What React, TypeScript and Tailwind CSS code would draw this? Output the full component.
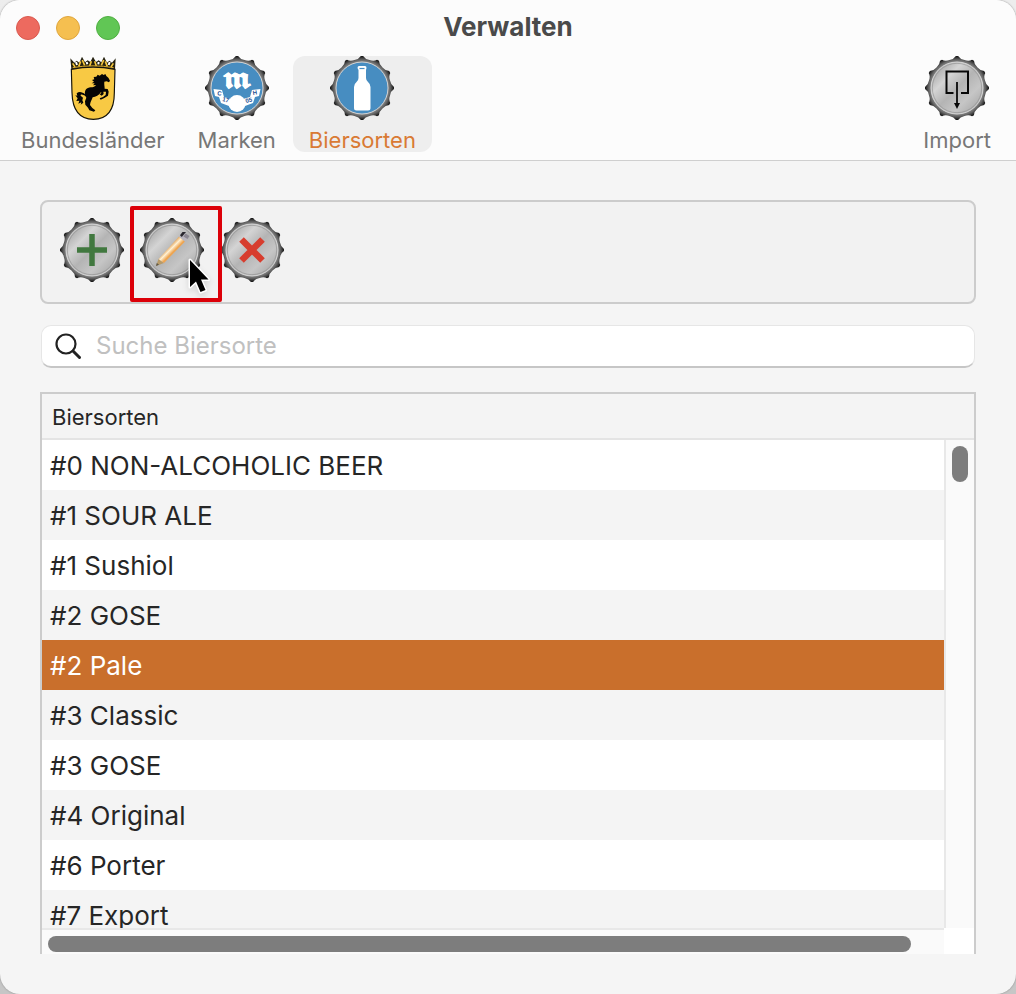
import { useState } from "react";
import type { ReactNode } from "react";
import clsx from "clsx";

const beers = [
  "#0 NON-ALCOHOLIC BEER",
  "#1 SOUR ALE",
  "#1 Sushiol",
  "#2 GOSE",
  "#2 Pale",
  "#3 Classic",
  "#3 GOSE",
  "#4 Original",
  "#6 Porter",
  "#7 Export",
];

// outline of a crown cap with twelve teeth
const TEETH = 12;
const at = (deg: number, r: number) => {
  const a = (deg * Math.PI) / 180;
  return `${(32 + r * Math.cos(a)).toFixed(2)} ${(32 + r * Math.sin(a)).toFixed(2)}`;
};
const capPath =
  Array.from({ length: TEETH }, (_, i) => {
    const d = i * 30;
    return `${i ? "L" : "M"}${at(d - 2, 32)} L${at(d + 2, 32)} Q${at(d + 6, 29)} ${at(d + 15, 29)} Q${at(d + 24, 29)} ${at(d + 28, 32)}`;
  }).join(" ") + "Z";

function Cap({ id, blue, children }: { id: string; blue?: boolean; children: ReactNode }) {
  return (
    <svg viewBox="0 0 64 64" className="size-16 shrink-0" aria-hidden="true">
      <defs>
        <radialGradient id={`${id}-rim`} gradientUnits="userSpaceOnUse" cx="32" cy="32" r="32">
          <stop offset="0.8" stopColor="#8a8a8a" />
          <stop offset="0.88" stopColor="#666" />
          <stop offset="0.93" stopColor="#444" />
          <stop offset="1" stopColor="#111" />
        </radialGradient>
        <linearGradient id={`${id}-face`} x1="0.1" y1="0.1" x2="0.9" y2="0.9">
          <stop offset="0" stopColor="#a6a6a6" />
          <stop offset="0.26" stopColor="#d4d4d4" />
          <stop offset="0.5" stopColor="#b4b4b4" />
          <stop offset="0.75" stopColor="#c6c6c6" />
          <stop offset="1" stopColor="#aaaaaa" />
        </linearGradient>
      </defs>
      <path d={capPath} fill={`url(#${id}-rim)`} />
      <circle cx="32" cy="32" r="26" fill={blue ? "#478dc1" : `url(#${id}-face)`} stroke="#d4d4d4" strokeWidth="1" />
      {!blue && <circle cx="32" cy="32" r="24.7" fill="none" stroke="#8c8c8c" strokeWidth="0.6" />}
      {children}
    </svg>
  );
}

function Crest() {
  return (
    <svg viewBox="3 18 192 192" className="size-16 shrink-0" aria-hidden="true">
      <path d="M34 58 L31 25 L43 38 L50 32 L58 38 L66 20 L75 37 L83 31 L91 36 L99 20 L108 36 L116 31 L124 37 L132 20 L141 38 L148 32 L156 38 L167 25 L165 58 Q99 46 34 58Z" fill="#24200f" />
      <path d="M38 40 l7 11 M62 34 l-6 16 M67 30 l7 16 M94 34 l-5 14 M104 34 l5 14 M131 30 l-7 16 M136 34 l6 16 M160 40 l-7 11" stroke="#f4c63d" strokeWidth="5" />
      <path d="M48 36 l3 9 M80 36 l2 7 M116 36 l-1 7 M149 36 l-3 9" stroke="#fff" strokeWidth="6" />
      <path d="M34 58 Q99 45 165 58 L163 128 C163 166 152 207 100 208 C48 207 37 166 36 128Z" fill="#f8c944" stroke="#15130a" strokeWidth="3.5" />
      <path d="M38 53 Q99 42 161 53" fill="none" stroke="#d8aa2d" strokeWidth="3" />
      <path
        d="M136 72 L139 78 L145 83 L150 92 L147 97 L140 94 L133 95 C132 103 134 109 134 116 L143 117 L146 125 L144 137 L133 144 L122 149 L119 145 L129 141 L137 135 L138 125 L130 125 L131 132 L125 137 L119 133 L124 129 L123 126 C117 136 107 140 98 142 C95 150 91 156 90 165 L97 174 L106 181 L102 185 L88 181 L84 173 L76 164 L75 154 L79 143 C77 139 75 136 72 136 C66 132 61 133 62 137 L69 143 L67 151 L70 158 L62 164 L64 157 L55 161 L58 152 L49 153 L53 145 L46 136 L52 137 L50 130 C58 123 68 127 75 133 C73 121 80 113 92 112 C100 112 105 109 108 105 L99 106 L104 100 L95 100 L102 95 L96 90 L103 88 L101 81 L109 80 L113 74 L119 77 L126 72 L131 75Z"
        fill="#050505"
      />
    </svg>
  );
}

function BrandCap() {
  return (
    <Cap id="brand" blue>
      <text x="32" y="31" textAnchor="middle" fill="#fff" stroke="#fff" strokeWidth="0.6" className="font-['DejaVu_Sans','DejaVu_Math_TeX_Gyre',serif] text-[26px] font-bold">
        𝖒
      </text>
      <path d="M8.500 33 L17 34 L19 41 L26 43 H38 L45 41 L47 34 L55.500 33 L54 40 L50 41 L48 47 L40 50 H24 L16 47 L14 41 L10 40Z" fill="#fff" />
      <circle cx="32" cy="47.500" r="8.500" fill="#fff" />
      <g fill="#1f4f93" className="font-['Liberation_Sans',sans-serif] text-[6px] font-bold">
        <text x="12" y="39" transform="rotate(10 12 39)">C</text>
        <text x="17" y="45" transform="rotate(14 17 45)">17</text>
        <text x="41" y="47" transform="rotate(-14 41 47)">05</text>
        <text x="48" y="39" transform="rotate(-8 48 39)">H</text>
      </g>
    </Cap>
  );
}

function BottleCap() {
  return (
    <Cap id="bottle" blue>
      <path d="M29 10 H35 Q36.500 10 36.500 12 L36 14 V22 Q36 24.500 38 26 Q40.500 28 40.500 31 V52 Q40.500 54.500 38 54.500 H26.500 Q24 54.500 24 52 V31 Q24 28 26.500 26 Q28.500 24.500 28.500 22 V14 L27.500 12 Q27.500 10 29 10Z" fill="#fff" />
      <path d="M29.500 12.500 h5" stroke="#478dc1" strokeWidth="1.2" />
    </Cap>
  );
}

function ImportCap() {
  return (
    <Cap id="import">
      <path d="M28.500 37 H21.500 V15.500 H43 V37 H36" fill="none" stroke="#080808" strokeWidth="2" />
      <path d="M32 26 V49" stroke="#080808" strokeWidth="1.800" />
      <path d="M29 47 H35 L32 53Z" fill="#080808" />
    </Cap>
  );
}

function PencilCap() {
  return (
    <Cap id="edit">
      <defs>
        <linearGradient id="wood" gradientUnits="userSpaceOnUse" x1="28" y1="29" x2="33" y2="34">
          <stop offset="0" stopColor="#e0a055" />
          <stop offset="0.5" stopColor="#fff0d2" />
          <stop offset="1" stopColor="#eda552" />
        </linearGradient>
      </defs>
      <g>
        <path d="M16 48 L18.500 41 L24 45Z" fill="#b89b68" />
        <path d="M16 48 L16.800 45 L19 46.800Z" fill="#5b5547" />
        <path d="M18.500 41 L39 18.500 L45 23.500 L24 45Z" fill="url(#wood)" />
        <path d="M39 18.500 L42.500 14.500 L49.500 19 L45 23.500Z" fill="#b9b5be" />
        <path d="M40 17.200 L42.500 14 H46 L41.800 19Z" fill="#29272e" />
        <path d="M45.500 15.500 L49.500 18 L47.500 21 L43.500 18.500Z" fill="#8b8791" />
      </g>
    </Cap>
  );
}

const tabs = [
  { label: "Bundesländer", icon: <Crest /> },
  { label: "Marken", icon: <BrandCap /> },
  { label: "Biersorten", icon: <BottleCap /> },
];

function TabButton({ label, icon, active, onClick }: { label: string; icon: ReactNode; active?: boolean; onClick?: () => void }) {
  return (
    <button
      type="button"
      onClick={onClick}
      className={clsx(
        "flex h-24 flex-col items-center rounded-xl px-4 text-[22px] leading-10",
        active ? "bg-[#eeeeee] text-[#d97a34]" : "text-[#777777]"
      )}
    >
      {icon}
      {label}
    </button>
  );
}

function Header() {
  const [tab, setTab] = useState("Biersorten");
  return (
    <header className="border-b border-[#cfcfcf] bg-[#fcfcfc] px-[5px] pb-2">
      <div className="grid h-14 grid-cols-3 items-center">
        <div className="flex gap-4 pl-[11px]">
          <button type="button" aria-label="Schließen" className="size-6 rounded-full border border-[#d95a50] bg-[#ed6a5f]" />
          <button type="button" aria-label="Minimieren" className="size-6 rounded-full border border-[#dfa63e] bg-[#f5bf50]" />
          <button type="button" aria-label="Zoomen" className="size-6 rounded-full border border-[#50af42] bg-[#61c655]" />
        </div>
        <h1 className="pb-0.5 text-center text-[26px] leading-8 font-bold text-[#4a4a4a]">Verwalten</h1>
      </div>
      <nav className="flex gap-px pr-1">
        {tabs.map((t) => (
          <TabButton key={t.label} label={t.label} icon={t.icon} active={tab === t.label} onClick={() => setTab(t.label)} />
        ))}
        <div className="ml-auto">
          <TabButton label="Import" icon={<ImportCap />} />
        </div>
      </nav>
    </header>
  );
}

function Toolbar() {
  return (
    <div className="flex h-26 shrink-0 items-start gap-4 rounded-lg border-2 border-[#cccccc] bg-[#f2f2f2] px-4.5 pt-4">
      <button type="button" aria-label="Hinzufügen">
        <Cap id="add">
          <path d="M32 16 V48 M17 32 H47" stroke="#41783f" strokeWidth="5.5" />
        </Cap>
      </button>
      <button type="button" aria-label="Bearbeiten" className="relative">
        <PencilCap />
        <span className="absolute -top-3 -left-2.5 z-10 h-24 w-23 rounded-xs border-4 border-[#dc0009]" />
        <svg viewBox="0 0 24 40" className="absolute top-10 left-12 z-20 h-10 w-6 drop-shadow-md" aria-hidden="true">
          <path
            d="M2 2 V29 L8 23.500 L12.500 34 L17.500 32 L13 21.500 H20.500Z"
            fill="#000"
            stroke="#fff"
            strokeWidth="3"
            strokeLinejoin="round"
            paintOrder="stroke"
          />
        </svg>
      </button>
      <button type="button" aria-label="Löschen">
        <Cap id="delete">
          <path d="M21.500 21.500 L42.500 42.500 M42.500 21.500 L21.500 42.500" stroke="#d73d2e" strokeWidth="6.5" />
        </Cap>
      </button>
    </div>
  );
}

function BeerTable() {
  const [selected, setSelected] = useState("#2 Pale");
  return (
    <section className="mt-6 flex min-h-0 flex-1 flex-col border-2 border-b-0 border-[#cccccc] bg-[#fafafa]">
      <div className="grid min-h-0 flex-1 grid-cols-[1fr_30px]">
        <div className="min-h-0 overflow-hidden">
          <table className="w-full border-separate border-spacing-0 text-left text-[#262626]">
            <thead>
              <tr className="h-[46px] bg-[#f4f4f4]">
                <th className="border-b-2 border-[#e4e4e4] px-2.5 pt-0.5 text-[22px] leading-8 font-normal">Biersorten</th>
              </tr>
            </thead>
            <tbody>
              {beers.map((b) => (
                <tr
                  key={b}
                  onClick={() => setSelected(b)}
                  className={clsx("h-[50px]", b === selected ? "bg-[#c96f2c] text-white" : "odd:bg-white even:bg-[#f4f4f4]")}
                >
                  <td className="px-2 pt-0.5 text-[26px] leading-8">{b}</td>
                </tr>
              ))}
            </tbody>
          </table>
        </div>
        <div className="flex flex-col">
          <div className="h-[46px] border-b-2 border-[#e4e4e4] bg-[#f4f4f4]" />
          <div className="flex-1 border-l-2 border-[#e8e8e8] p-1.5">
            <div className="h-9 w-4 rounded-full bg-[#7d7d7d]" />
          </div>
        </div>
      </div>
      <div className="flex h-[26px] shrink-0">
        <div className="flex-1 border-t-2 border-[#e8e8e8] px-1.5 pt-1.5">
          <div className="h-4 w-[97%] rounded-full bg-[#7d7d7d]" />
        </div>
        <div className="w-[30px] bg-white" />
      </div>
    </section>
  );
}

export default function App() {
  return (
    <div className="h-screen bg-linear-to-b from-[#ededed] to-[#c6c6c6] font-['Inter',sans-serif]">
      <div className="flex h-full flex-col overflow-hidden rounded-[20px] bg-[#f5f5f5] shadow-[0_0_2px_#888]">
        <Header />
        <main className="flex min-h-0 flex-1 flex-col px-10 pt-[39px] pb-10">
          <Toolbar />
          <label className="mx-px mt-[21px] flex h-[43px] shrink-0 items-center gap-3.5 rounded-[10px] border border-[#e6e6e6] border-b-2 border-b-[#c6c6c6] bg-white px-3">
            <svg viewBox="0 0 28 28" className="size-7" fill="none" stroke="#222" aria-hidden="true">
              <circle cx="12" cy="12" r="9.500" strokeWidth="2.2" />
              <path d="M19 19 L25.500 25.500" strokeWidth="3" strokeLinecap="round" />
            </svg>
            <input
              type="text"
              aria-label="Suche Biersorte"
              placeholder="Suche Biersorte"
              className="min-w-0 flex-1 text-2xl leading-8 text-[#262626] outline-none placeholder:text-[#c0c0c0]"
            />
          </label>
          <BeerTable />
        </main>
      </div>
    </div>
  );
}
